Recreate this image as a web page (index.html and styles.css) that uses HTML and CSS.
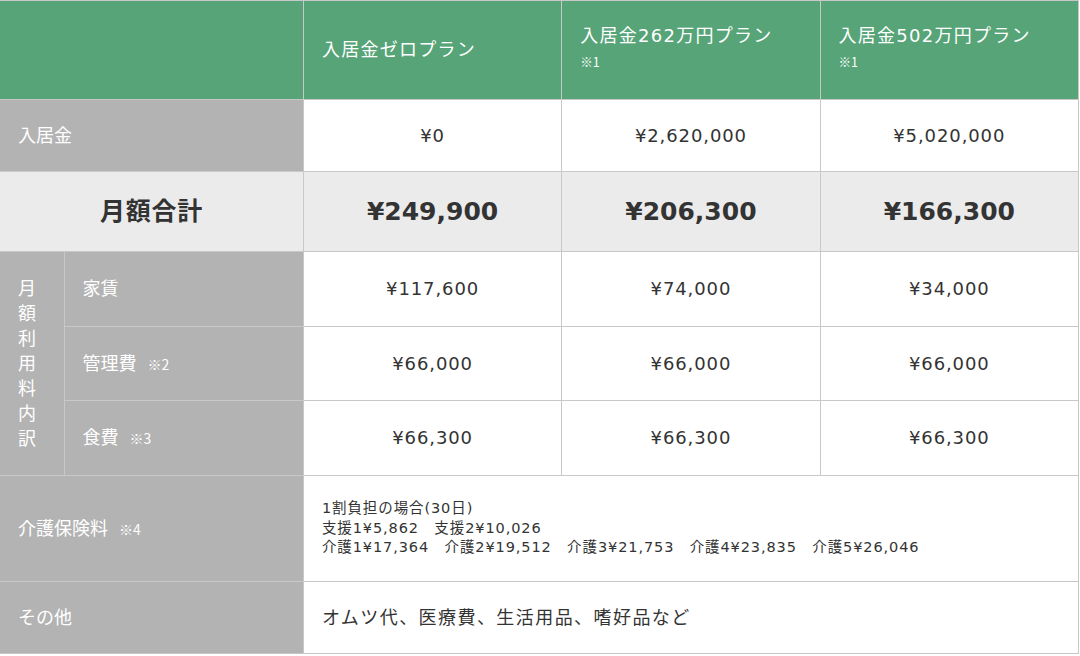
FILE: index.html
```html
<!DOCTYPE html>
<html lang="ja">
<head>
<meta charset="utf-8">
<title>料金プラン</title>
<link rel="stylesheet" href="styles.css">
</head>
<body>
<table class="price">
  <colgroup>
    <col class="c-group">
    <col class="c-label">
    <col class="c-data">
    <col class="c-data">
    <col class="c-data">
  </colgroup>
  <thead>
    <tr class="r-head">
      <th colspan="2" class="head-blank"></th>
      <th class="head">入居金ゼロプラン</th>
      <th class="head">入居金262万円プラン<br><span class="note">※1</span></th>
      <th class="head">入居金502万円プラン<br><span class="note">※1</span></th>
    </tr>
  </thead>
  <tbody>
    <tr class="r-entry">
      <th colspan="2" class="label">入居金</th>
      <td class="val">¥0</td>
      <td class="val">¥2,620,000</td>
      <td class="val">¥5,020,000</td>
    </tr>
    <tr class="r-total">
      <th colspan="2" class="total-label">月額合計</th>
      <td class="total">¥249,900</td>
      <td class="total">¥206,300</td>
      <td class="total">¥166,300</td>
    </tr>
    <tr class="r-rent">
      <th rowspan="3" class="group">月額利用料内訳</th>
      <th class="label sub">家賃</th>
      <td class="val">¥117,600</td>
      <td class="val">¥74,000</td>
      <td class="val">¥34,000</td>
    </tr>
    <tr class="r-mgmt">
      <th class="label sub">管理費<span class="note">※2</span></th>
      <td class="val">¥66,000</td>
      <td class="val">¥66,000</td>
      <td class="val">¥66,000</td>
    </tr>
    <tr class="r-food">
      <th class="label sub">食費<span class="note">※3</span></th>
      <td class="val">¥66,300</td>
      <td class="val">¥66,300</td>
      <td class="val">¥66,300</td>
    </tr>
    <tr class="r-care">
      <th colspan="2" class="label">介護保険料<span class="note">※4</span></th>
      <td colspan="3" class="care">1割負担の場合(30日)<br>支援1¥5,862　支援2¥10,026<br>介護1¥17,364　介護2¥19,512　介護3¥21,753　介護4¥23,835　介護5¥26,046</td>
    </tr>
    <tr class="r-other">
      <th colspan="2" class="label">その他</th>
      <td colspan="3" class="other">オムツ代、医療費、生活用品、嗜好品など</td>
    </tr>
  </tbody>
</table>
</body>
</html>
```
FILE: styles.css
```css
html, body {
  margin: 0;
  padding: 0;
  background: #ffffff;
}
body {
  font-family: "DejaVu Sans", "Noto Sans CJK JP", sans-serif;
  color: #333333;
}
.price {
  border-collapse: collapse;
  table-layout: fixed;
  width: 1079px;
  border-top: 1px solid #c4c4c4;
  border-right: 1px solid #c4c4c4;
  border-bottom: 1px solid #c4c4c4;
}
.c-group { width: 64px; }
.c-label { width: 239px; }
.c-data { width: 258px; }

.price th, .price td {
  border: 1px solid #c8c8c8;
  padding: 0 18px;
  font-weight: normal;
  vertical-align: middle;
  text-align: left;
  box-sizing: border-box;
}
.price tr > :first-child { border-left: none; }

.r-head > * { height: 99px; }
.r-entry > * { height: 72px; }
.r-total > * { height: 80px; }
.r-rent > * { height: 75px; }
.r-mgmt > * { height: 74px; }
.r-food > * { height: 75px; }
.r-care > * { height: 106px; }
.r-other > * { height: 72px; }

.head, .head-blank {
  background: #56a477;
  color: #ffffff;
  font-size: 18px;
  line-height: 26px;
  letter-spacing: 0.07em;
  padding-bottom: 2px;
}
.note {
  font-family: "Noto Sans CJK JP", sans-serif;
  font-size: 14px;
  margin-left: 11px;
  letter-spacing: 0;
}
.head .note {
  margin-left: 0;
  font-size: 12.5px;
  vertical-align: 3px;
}

.label, .group {
  background: #b3b3b3;
  color: #ffffff;
  font-size: 18px;
  line-height: 24px;
  border-color: #c6c6c6;
  padding-bottom: 6px;
}
.group {
  width: 64px;
  line-height: 25px;
  word-break: break-all;
  padding-right: 28px;
  padding-bottom: 3px;
}
.val {
  font-size: 18px;
  line-height: 24px;
  text-align: center !important;
  letter-spacing: 0.05em;
  padding-bottom: 4px;
}
.total-label, .total {
  background: #ebebeb;
  font-weight: bold !important;
  font-size: 25px;
  line-height: 32px;
  text-align: center !important;
  color: #333333;
  padding-bottom: 7px;
}
.total-label { letter-spacing: 0.03em; }
.care {
  font-size: 14.5px;
  line-height: 19.5px;
  letter-spacing: 0.9px;
  padding-top: 2px;
}
.other {
  font-size: 18px;
  line-height: 24px;
  letter-spacing: 0.08em;
  padding-bottom: 4px;
}
```
